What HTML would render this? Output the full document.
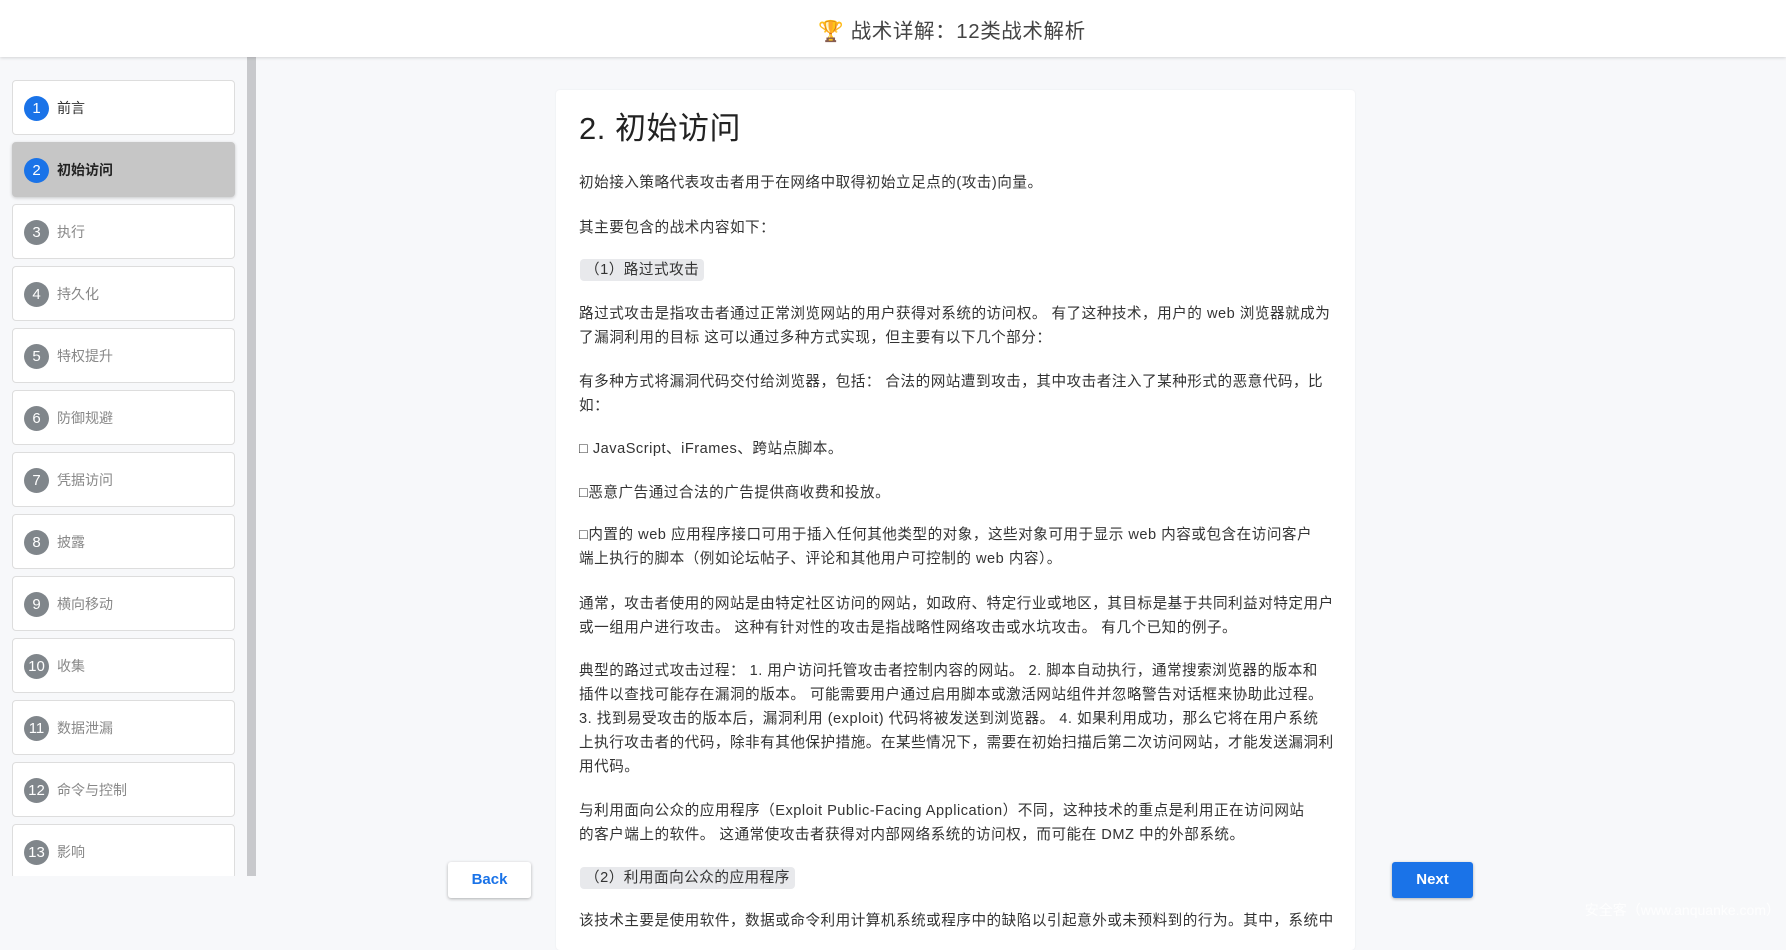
<!DOCTYPE html>
<html><head><meta charset="utf-8"><style>
*{margin:0;padding:0;box-sizing:border-box}
body{width:1786px;height:930px;overflow:hidden;background:#f7f8fa;font-family:"Liberation Sans","Noto Sans CJK SC",sans-serif;position:relative;color:#333}
.hdr{position:absolute;left:0;top:0;width:1786px;height:57px;background:#fff;box-shadow:0 1px 3px rgba(0,0,0,.15);z-index:2}
.hdr .t{position:absolute;left:118px;right:0;top:14px;text-align:center;font-size:20.5px;color:#444;letter-spacing:.6px}
.side{position:absolute;left:0;top:57px;width:246px;height:819px;background:#f7f8fa;overflow:hidden}
.sb{position:absolute;left:247px;top:57px;width:9px;height:819px;background:#c8c9cc}
.it{position:absolute;left:12px;width:223px;height:55px;background:#fff;border:1px solid #ddd;border-radius:4px;font-size:14px;color:#888}
.it .c{position:absolute;left:11px;top:15px;width:25px;height:25px;border-radius:50%;background:#80868b;color:#fff;font-size:15px;text-align:center;line-height:25px}
.it .l{position:absolute;left:44px;top:17px}
.it.a .c,.it.f .c{background:#1a73e8}
.it.f .l{color:#333}
.it.a{background:#c6c6c6;border-color:#c6c6c6;box-shadow:0 1px 3px rgba(0,0,0,.2)}
.it.a .l{color:#222;font-weight:bold}
.card{position:absolute;left:556px;top:90px;width:799px;height:860px;background:#fff;border-radius:4px;box-shadow:0 0 2px rgba(0,0,0,.06)}
h1{position:absolute;left:579px;top:103px;font-size:31px;font-weight:normal;color:#222;letter-spacing:.5px}
p{position:absolute;left:579px;font-size:14.6px;line-height:24px;color:#333;letter-spacing:.5px;white-space:nowrap}
.tag{position:absolute;left:580px;height:22px;background:#e8e9ec;border-radius:4px;font-size:14.6px;line-height:22px;padding:0 5px;color:#333;letter-spacing:.5px}
.btn{position:absolute;top:862px;height:36px;border-radius:3px;font-size:15px;font-weight:bold;text-align:center;line-height:36px;box-shadow:0 1px 3px rgba(0,0,0,.3)}
.wm{position:absolute;right:6px;top:900px;color:#fff;font-size:14px;opacity:.9}
</style></head><body>
<div class="hdr"><div class="t">🏆 战术详解：12类战术解析</div></div>
<div class="side">
<div class="it f" style="top:23px"><span class="c">1</span><span class="l">前言</span></div>
<div class="it a" style="top:85px"><span class="c">2</span><span class="l">初始访问</span></div>
<div class="it" style="top:147px"><span class="c">3</span><span class="l">执行</span></div>
<div class="it" style="top:209px"><span class="c">4</span><span class="l">持久化</span></div>
<div class="it" style="top:271px"><span class="c">5</span><span class="l">特权提升</span></div>
<div class="it" style="top:333px"><span class="c">6</span><span class="l">防御规避</span></div>
<div class="it" style="top:395px"><span class="c">7</span><span class="l">凭据访问</span></div>
<div class="it" style="top:457px"><span class="c">8</span><span class="l">披露</span></div>
<div class="it" style="top:519px"><span class="c">9</span><span class="l">横向移动</span></div>
<div class="it" style="top:581px"><span class="c">10</span><span class="l">收集</span></div>
<div class="it" style="top:643px"><span class="c">11</span><span class="l">数据泄漏</span></div>
<div class="it" style="top:705px"><span class="c">12</span><span class="l">命令与控制</span></div>
<div class="it" style="top:767px"><span class="c">13</span><span class="l">影响</span></div>
</div>
<div class="sb"></div>
<div class="card"></div>
<h1>2. 初始访问</h1>
<p style="top:171px">初始接入策略代表攻击者用于在网络中取得初始立足点的(攻击)向量。</p>
<p style="top:216px">其主要包含的战术内容如下：</p>
<div class="tag" style="top:259px">（1）路过式攻击</div>
<p style="top:302px">路过式攻击是指攻击者通过正常浏览网站的用户获得对系统的访问权。 有了这种技术，用户的 web 浏览器就成为<br>了漏洞利用的目标 这可以通过多种方式实现，但主要有以下几个部分：</p>
<p style="top:370px">有多种方式将漏洞代码交付给浏览器，包括： 合法的网站遭到攻击，其中攻击者注入了某种形式的恶意代码，比<br>如：</p>
<p style="top:437px">□ JavaScript、iFrames、跨站点脚本。</p>
<p style="top:481px">□恶意广告通过合法的广告提供商收费和投放。</p>
<p style="top:523px">□内置的 web 应用程序接口可用于插入任何其他类型的对象，这些对象可用于显示 web 内容或包含在访问客户<br>端上执行的脚本（例如论坛帖子、评论和其他用户可控制的 web 内容）。</p>
<p style="top:592px">通常，攻击者使用的网站是由特定社区访问的网站，如政府、特定行业或地区，其目标是基于共同利益对特定用户<br>或一组用户进行攻击。 这种有针对性的攻击是指战略性网络攻击或水坑攻击。 有几个已知的例子。</p>
<p style="top:659px">典型的路过式攻击过程： 1. 用户访问托管攻击者控制内容的网站。 2. 脚本自动执行，通常搜索浏览器的版本和<br>插件以查找可能存在漏洞的版本。 可能需要用户通过启用脚本或激活网站组件并忽略警告对话框来协助此过程。<br>3. 找到易受攻击的版本后，漏洞利用 (exploit) 代码将被发送到浏览器。 4. 如果利用成功，那么它将在用户系统<br>上执行攻击者的代码，除非有其他保护措施。在某些情况下，需要在初始扫描后第二次访问网站，才能发送漏洞利<br>用代码。</p>
<p style="top:799px">与利用面向公众的应用程序（Exploit Public-Facing Application）不同，这种技术的重点是利用正在访问网站<br>的客户端上的软件。 这通常使攻击者获得对内部网络系统的访问权，而可能在 DMZ 中的外部系统。</p>
<div class="tag" style="top:867px">（2）利用面向公众的应用程序</div>
<p style="top:909px">该技术主要是使用软件，数据或命令利用计算机系统或程序中的缺陷以引起意外或未预料到的行为。其中，系统中</p>
<div class="btn" style="left:448px;width:83px;background:#fff;color:#1a73e8">Back</div>
<div class="btn" style="left:1392px;width:81px;background:#1a73e8;color:#fff">Next</div>
<div class="wm">安全客（www.anquanke.com）</div>
</body></html>
